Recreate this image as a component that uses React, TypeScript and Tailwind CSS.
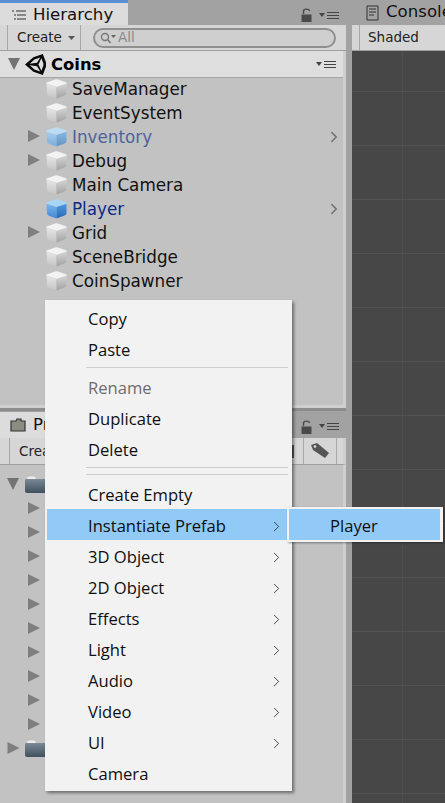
import { ChevronRight } from 'lucide-react'

const unity = "font-['DejaVu_Sans',sans-serif]"

function Cube({ color = 'gray', id }: { color?: 'gray' | 'blue' | 'faded'; id: string }) {
  const palette = {
    gray: ['#f2f2f2', '#e6e6e6', '#c6c6c6', '#d4d4d4', '#a2a2a2'],
    blue: ['#a9d6f7', '#7db8ee', '#3f86d6', '#4f98e2', '#2a69b4'],
    faded: ['#bcdcf3', '#a8cdee', '#7aaddb', '#86b6e0', '#6496c4'],
  }[color]
  return (
    <svg width="21" height="20" viewBox="0 0 21 21" preserveAspectRatio="none" className="shrink-0 mb-[3px]">
      <defs>
        <linearGradient id={`${id}-l`} x1="0" y1="0" x2="0" y2="1">
          <stop offset="0" stopColor={palette[1]} />
          <stop offset="1" stopColor={palette[2]} />
        </linearGradient>
        <linearGradient id={`${id}-r`} x1="0" y1="0" x2="0" y2="1">
          <stop offset="0" stopColor={palette[3]} />
          <stop offset="1" stopColor={palette[4]} />
        </linearGradient>
      </defs>
      <path d="M9 0.5 Q10.5 0 12 0.5 L20 3.5 Q21 4 20.5 5 L11 8.5 L0.5 5 Q0 4 1 3.5 Z" fill={palette[0]} />
      <path d="M0.5 5 L10.5 8.5 V20.5 L3 17.5 Q1 17 1 15 Z" fill={`url(#${id}-l)`} />
      <path d="M20.5 5 L10.5 8.5 V20.5 L18 17.5 Q20.5 17 20.5 15 Z" fill={`url(#${id}-r)`} />
    </svg>
  )
}

function Tri({ down = false, big = false }: { down?: boolean; big?: boolean }) {
  if (down) {
    return (
      <svg width="14" height="14" viewBox="0 0 14 14" className="shrink-0">
        <path d="M1 1 H13 L7 13 Z" fill="#737373" />
      </svg>
    )
  }
  return (
    <svg width={big ? 13 : 12} height="14" viewBox="0 0 12 14" className="shrink-0">
      <path d="M0 1 L12 7 L0 13 Z" fill="#7f7f7f" />
    </svg>
  )
}

function Lock() {
  return (
    <svg width="11" height="14" viewBox="0 0 11 14" className="shrink-0">
      <path d="M2.5 6 V3 C3 0.5 8 0.5 8.7 3" fill="none" stroke="#4a4a4a" strokeWidth="1.4" />
      <rect x="0.5" y="6.5" width="10" height="7.5" fill="#4a4a4a" />
    </svg>
  )
}

function PaneMenu() {
  return (
    <svg width="21" height="9" viewBox="0 0 21 9" className="shrink-0">
      <path d="M0 2 H6 L3 6 Z" fill="#444" />
      <path d="M8 1.5 H20 M8 4.5 H20 M8 7.5 H20" stroke="#444" strokeWidth="1" />
    </svg>
  )
}

function Folder() {
  return (
    <svg width="26" height="17" viewBox="0 0 26 17" className="shrink-0">
      <defs>
        <linearGradient id="folder-fill" x1="0" y1="0" x2="0" y2="1">
          <stop offset="0" stopColor="#7a8a96" />
          <stop offset="1" stopColor="#3f505d" />
        </linearGradient>
      </defs>
      <path d="M0 4 Q0 3 2 3 H26 V17 H2 Q0 17 0 15 Z" fill="url(#folder-fill)" />
      <path d="M2 3 Q2 0.5 4 0.5 H9 Q10 0.5 11 3 Z" fill="#eeeeee" />
    </svg>
  )
}

function UnityLogo() {
  return (
    <svg width="21" height="21" viewBox="0 0 20 20" className="ml-[4px] shrink-0">
      <path d="M0 10 L8 3 L17 0 L20 8 V12 L17 20 L8 17 Z" fill="#0a0a0a" />
      <path d="M4.5 9.3 L9 5.2 L14.5 3.3 L11.5 8.4 Z" fill="#dedede" />
      <path d="M15.6 4 L17.5 9 V11 L15.6 16 L12.8 10 Z" fill="#dedede" />
      <path d="M4.5 10.7 L11.5 11.6 L14.5 16.7 L9 14.8 Z" fill="#dedede" />
    </svg>
  )
}

const rows = [
  { name: 'SaveManager' },
  { name: 'EventSystem' },
  { name: 'Inventory', arrow: true, cube: 'faded', text: 'text-[#4f629c]', more: true },
  { name: 'Debug', arrow: true },
  { name: 'Main Camera' },
  { name: 'Player', cube: 'blue', text: 'text-[#0c2a8a]', more: true },
  { name: 'Grid', arrow: true },
  { name: 'SceneBridge' },
  { name: 'CoinSpawner' },
] as const

type MenuItem = { label: string; sub?: boolean; disabled?: boolean; active?: boolean }

const menuTop: MenuItem[] = [{ label: 'Copy' }, { label: 'Paste' }]
const menuMid: MenuItem[] = [{ label: 'Rename', disabled: true }, { label: 'Duplicate' }, { label: 'Delete' }]
const menuBottom: MenuItem[] = [
  { label: 'Create Empty' },
  { label: 'Instantiate Prefab', sub: true, active: true },
  { label: '3D Object', sub: true },
  { label: '2D Object', sub: true },
  { label: 'Effects', sub: true },
  { label: 'Light', sub: true },
  { label: 'Audio', sub: true },
  { label: 'Video', sub: true },
  { label: 'UI', sub: true },
  { label: 'Camera' },
]

function MenuRow({ item }: { item: MenuItem }) {
  return (
    <div className={`h-[31px] flex items-center pt-[3px] pl-[41px] pr-[3px] text-[16.6px] ${item.active ? 'bg-[#91c9f7]' : ''} ${item.disabled ? 'text-[#6d6d6d]' : 'text-[#0f0f0f]'}`}>
      <span className="flex-1">{item.label}</span>
      {item.sub && <ChevronRight size={17} strokeWidth={1.25} className="text-[#333]" />}
    </div>
  )
}

export default function App() {
  return (
    <div className={`relative w-[445px] h-[803px] overflow-hidden flex bg-[#a2a2a2] ${unity}`}>
      {/* Left column */}
      <div className="w-[346px] shrink-0 flex flex-col">
        {/* Hierarchy */}
        <div className="h-[25px] flex items-end bg-[#a2a2a2] shrink-0">
          <div className="w-[128px] h-[25px] bg-[#dcdcdc] border-t-[3px] border-[#5b8fd4] flex items-center pl-[11px] pt-[2px] gap-[7px] text-[16.6px] text-[#111]">
            <svg width="15" height="11" viewBox="0 0 15 11">
              <path d="M1 1 H3 M5 1 H15 M3 5 H5 M6 5 H15 M3 9 H5 M6 9 H15" stroke="#333" strokeWidth="1.2" />
            </svg>
            Hierarchy
          </div>
          <div className="flex-1 h-[25px] flex items-center justify-end gap-[7px] pt-[5px] pr-[6px]">
            <Lock />
            <PaneMenu />
          </div>
        </div>
        <div className="h-[26px] shrink-0 bg-[#d6d6d6] flex items-center border-b border-[#a0a0a0]">
          <div className="ml-[7px] w-[74px] h-full border-x border-[#a8a8a8] flex items-center pl-[9px] gap-[6px] text-[13.5px] text-[#222]">
            Create
            <svg width="7" height="4" viewBox="0 0 7 4"><path d="M0 0 H7 L3.5 4 Z" fill="#555" /></svg>
          </div>
          <div className="ml-[12px] w-[243px] h-[20px] rounded-full border-2 border-[#8f8f8f] bg-[#cfcfcf] flex items-center pl-[5px] gap-[1px] text-[13.5px] text-[#8a8a8a]">
            <svg width="17" height="12" viewBox="0 0 17 12" className="shrink-0">
              <circle cx="5" cy="5" r="3.5" fill="none" stroke="#777" strokeWidth="1.4" />
              <path d="M7.5 7.5 L10.5 11" stroke="#777" strokeWidth="1.6" />
              <path d="M11 3 H16 L13.5 6 Z" fill="#666" />
            </svg>
            All
          </div>
        </div>
        <div className="shrink-0 h-[357px] bg-[#c2c2c2] border-r-[3px] border-b-[3px] border-[#cfcfcf]">
          <div className="h-[27px] bg-[#dedede] border-b border-[#a6a6a6] flex items-center pl-[7px] pr-[6px]">
            <Tri down />
            <UnityLogo />
            <span className="ml-[5px] flex-1 pt-[2px] font-bold text-[16.4px] text-black">Coins</span>
            <PaneMenu />
          </div>
          <div className="flex flex-col">
            {rows.map((r) => (
              <div key={r.name} className="h-[24px] flex items-center relative pl-[46px]">
                {'arrow' in r && (
                  <span className="absolute left-[28px] top-[3px]"><Tri /></span>
                )}
                <Cube id={r.name.replace(' ', '')} color={'cube' in r ? r.cube : 'gray'} />
                <span className={`ml-[5px] flex-1 pb-[1px] text-[16.8px] ${'text' in r ? r.text : 'text-[#111]'}`}>{r.name}</span>
                {'more' in r && <ChevronRight size={18} strokeWidth={2} className="text-[#6f6f6f] mb-[2px]" />}
              </div>
            ))}
          </div>
        </div>
        <div className="h-[30px] shrink-0 flex items-end bg-[#a2a2a2] border-t-[3px] border-[#8d8d8d]">
          <div className="w-[130px] h-[26px] flex items-center pl-[10px] gap-[7px] bg-[#dcdcdc] text-[16.6px] text-[#111]">
            <svg width="16" height="14" viewBox="0 0 16 14">
              <path d="M1 3 H6 L7 1 H11 V3 H15 V13 H1 Z" fill="#8c8c80" stroke="#333" strokeWidth="1.2" />
            </svg>
            Pr
          </div>
          <div className="flex-1 h-[26px] flex items-center justify-end gap-[7px] pt-[3px] pr-[6px]">
            <Lock />
            <PaneMenu />
          </div>
        </div>
        <div className="h-[27px] shrink-0 bg-[#d6d6d6] flex items-center border-b border-[#a0a0a0] border-r-[3px] border-r-[#cfcfcf]">
          <div className="ml-[9px] h-full border-l border-[#a8a8a8] pl-[9px] flex-1 flex items-center text-[13.5px] text-[#222]">Create</div>
          <svg width="10" height="13" viewBox="0 0 10 13" className="shrink-0 mr-[7px]">
            <path d="M2 0 H8 V13 H0 V5 H2 Z" fill="#555" />
          </svg>
          <div className="h-full w-[34px] border-x border-[#a8a8a8] flex items-center justify-center mr-[6px]">
            <svg width="18" height="16" viewBox="0 0 18 16">
              <path d="M0 2 L6 0 L18 10 L14 15 L2 7 Z" fill="#555" />
              <circle cx="4" cy="3.5" r="1.3" fill="#ddd" />
            </svg>
          </div>
        </div>
        <div className="flex-1 bg-[#c2c2c2] border-r-[3px] border-[#cfcfcf] flex flex-col pt-[7px]">
          <div className="h-[24px] flex items-center pl-[6px] gap-[5px]">
            <Tri down />
            <Folder />
          </div>
          {Array.from({ length: 10 }).map((_, i) => (
            <div key={i} className="h-[24px] flex items-center pl-[28px]">
              <Tri />
            </div>
          ))}
          <div className="h-[24px] flex items-center pl-[7px] gap-[5px]">
            <Tri big />
            <Folder />
          </div>
        </div>
      </div>

      {/* Right column */}
      <div className="flex-1 flex flex-col ml-[6px] min-w-0">
        <div className="h-[25px] shrink-0 flex items-center pl-[14px] gap-[7px] text-[16.6px] text-[#111] whitespace-nowrap">
          <svg width="13" height="16" viewBox="0 0 13 16" className="shrink-0">
            <path d="M1 1 H12 V15 H1 Z M3 4 H10 M3 7 H10 M3 10 H8" fill="none" stroke="#333" strokeWidth="1" />
          </svg>
          Console
        </div>
        <div className="h-[26px] shrink-0 bg-[#d6d6d6] flex items-center text-[13.5px] text-[#222] border-b border-[#a0a0a0]">
          <span className="ml-[7px] h-full border-l border-[#a8a8a8] pl-[8px] flex items-center">Shaded</span>
        </div>
        <div className="flex-1 bg-[#474747] bg-[linear-gradient(#525252_1px,transparent_1px),linear-gradient(90deg,#4f4f4f_1px,transparent_1px)] bg-[length:51px_54px] bg-[position:50px_40px]" />
      </div>

      {/* Context menu */}
      <div className="absolute left-[45px] top-[300px] w-[247px] h-[491px] bg-[#f2f2f2] shadow-[2px_2px_3px_rgba(0,0,0,0.45)] pt-[2px] pl-[2px] pr-[4px] font-['Open_Sans',sans-serif]">
        {menuTop.map((m) => <MenuRow key={m.label} item={m} />)}
        <div className="h-[7px] flex items-center ml-[39px]"><div className="h-px w-full bg-[#cfcfcf]" /></div>
        {menuMid.map((m) => <MenuRow key={m.label} item={m} />)}
        <div className="h-px mt-[3px] ml-[39px] bg-[#cfcfcf]" />
        <div className="h-px mt-[6px] mb-[3px] ml-[39px] bg-[#cfcfcf]" />
        {menuBottom.map((m) => <MenuRow key={m.label} item={m} />)}
      </div>

      {/* Submenu */}
      <div className="absolute left-[287px] top-[507px] w-[156px] h-[35px] bg-[#f2f2f2] pt-[2px] pb-[2px] pl-[2px] pr-[3px] shadow-[1px_1px_2px_rgba(0,0,0,0.4)] font-['Open_Sans',sans-serif]">
        <div className="h-full bg-[#91c9f7] flex items-center pt-[3px] pl-[41px] text-[16.6px] text-[#0f0f0f]">Player</div>
      </div>
    </div>
  )
}
